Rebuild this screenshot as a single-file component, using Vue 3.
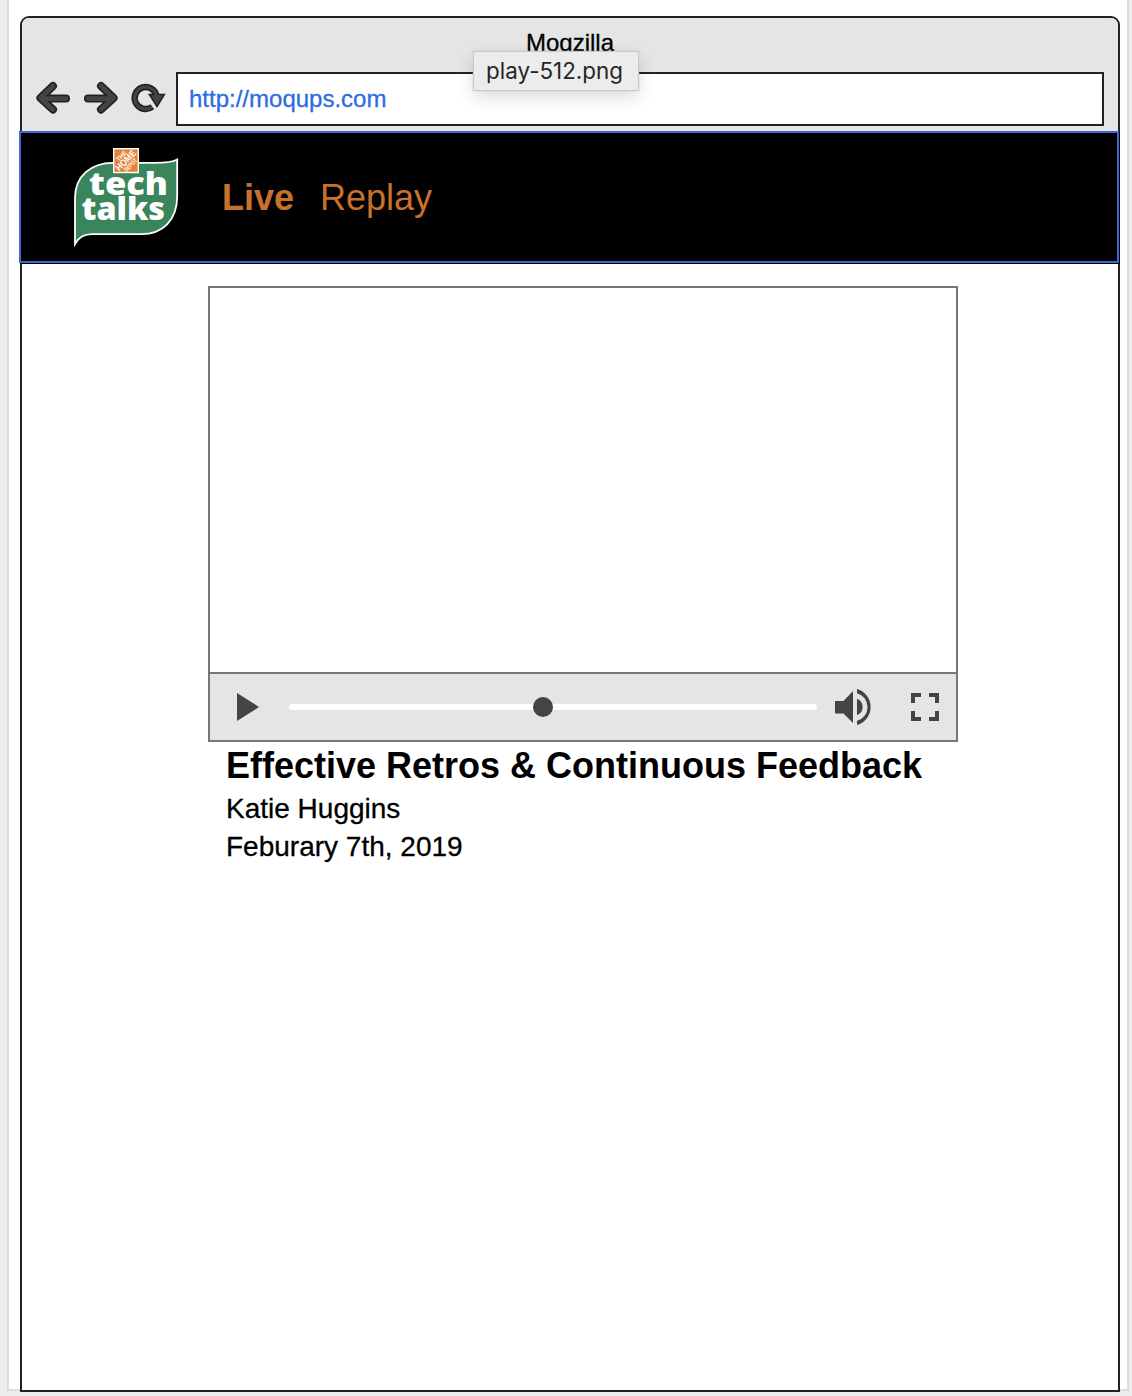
<script setup>
const url = 'http://moqups.com'
const talk = {
  title: 'Effective Retros & Continuous Feedback',
  speaker: 'Katie Huggins',
  date: 'Feburary 7th, 2019',
}
</script>

<template>
  <div class="canvas">
    <div class="paper">
      <div class="browser">
        <header class="chrome">
          <div class="title">Moqzilla</div>
          <div class="toolbar">
            <svg class="tools" width="142" height="44" viewBox="30 76 142 44">
              <g fill="none" stroke-linecap="round" stroke-linejoin="round">
                <g stroke="#222" stroke-width="8">
                  <path d="M53 86 L40.400 98 L53 109.500 M42 98.600 H66" />
                  <path d="M101 86 L113.600 98 L101 109.500 M112 98.600 H88" />
                </g>
                <g stroke="#444" stroke-width="4.600">
                  <path d="M53 86 L40.400 98 L53 109.500 M42 98.600 H66" />
                  <path d="M101 86 L113.600 98 L101 109.500 M112 98.600 H88" />
                </g>
              </g>
              <path d="M152.300 106.800 A11 11 0 1 1 156.500 96" fill="none" stroke="#222" stroke-width="6.400" />
              <path d="M149.400 94.500 H164.300 L157 106.400 Z" fill="#444" stroke="#222" stroke-width="1.600" />
              <path d="M151.600 107.200 A11 11 0 1 1 156.600 97" fill="none" stroke="#444" stroke-width="3" />
            </svg>
            <div class="address">{{ url }}</div>
          </div>
          <div class="tooltip">play-512.png</div>
        </header>

        <nav class="nav">
          <svg class="logo" width="106" height="102" viewBox="73 147 106 102">
            <path
              d="M75 244 V198 C75 176 91 162.800 113 162.800 H155 C164 162.800 172 162.500 177.200 159.500 V196 C177.200 220 163 234.200 141 234.200 H92 C84 234.200 78.500 237.500 75 244 Z"
              fill="#3b855d" stroke="#fff" stroke-width="1.800" stroke-miterlimit="8"
            />
            <rect x="113.700" y="148.700" width="24.600" height="23.800" fill="#e5813a" stroke="#fff" stroke-width="1.400" />
            <g class="depot" transform="translate(126 160.600) rotate(-45)" text-anchor="middle">
              <text y="-4.400" font-size="6" textLength="12" lengthAdjust="spacingAndGlyphs">THE</text>
              <text y="3" font-size="9.500" textLength="25" lengthAdjust="spacingAndGlyphs">HOME</text>
              <text y="8.600" font-size="6.500" textLength="16" lengthAdjust="spacingAndGlyphs">DEPOT</text>
            </g>
            <g class="wordmark">
              <text x="89" y="195.400" textLength="79" lengthAdjust="spacingAndGlyphs">tech</text>
              <text x="81.600" y="220" textLength="83.500" lengthAdjust="spacingAndGlyphs">talks</text>
            </g>
          </svg>
          <a class="link active">Live</a>
          <a class="link">Replay</a>
        </nav>

        <main class="content">
          <section class="player">
            <div class="screen"></div>
            <div class="controls">
              <svg class="play" width="22" height="28" viewBox="0 0 22 28">
                <path d="M0 0 L22 14 L0 28 Z" fill="#444" />
              </svg>
              <div class="track"><span class="knob"></span></div>
              <svg class="volume" width="37" height="36" viewBox="0 0 37 36">
                <g fill="#444">
                  <path d="M0 12 H8.500 L18 2 V34 L8.500 24.500 H0 Z" />
                  <path d="M22 9.800 A8.800 8.800 0 0 1 22 26.200 Z" />
                  <path d="M22 0 A18.700 18.700 0 0 1 22 36 V31.800 A14.300 14.300 0 0 0 22 4.200 Z" />
                </g>
              </svg>
              <svg class="expand" width="28" height="28" viewBox="0 0 28 28">
                <path
                  d="M2 10 V2 H10 M18 2 H26 V10 M26 18 V26 H18 M10 26 H2 V18"
                  fill="none" stroke="#444" stroke-width="4"
                />
              </svg>
            </div>
          </section>
          <h1>{{ talk.title }}</h1>
          <p>{{ talk.speaker }}</p>
          <p>{{ talk.date }}</p>
        </main>
      </div>
    </div>
  </div>
</template>

<style>
body {
  background: #ededed;
}
</style>

<style scoped>
.canvas {
  box-sizing: border-box;
  height: 1396px;
  padding: 0 3px 0 7px;
  overflow: hidden;
  font-family: "Liberation Sans", Arial, sans-serif;
  color: #000;
}
.paper {
  box-sizing: border-box;
  height: 1391px;
  padding: 16px 7px 0 11px;
  background: #fff;
  border: 2px solid #dcdcdc;
  border-top: 0;
}
.browser {
  box-sizing: border-box;
  width: 1100px;
  height: 1376px;
  border: 2px solid #222;
  border-radius: 9px 9px 0 0;
  background: #fff;
}
.chrome {
  position: relative;
  box-sizing: border-box;
  height: 113px;
  padding: 11px 14px 0 8px;
  background: #e5e5e5;
  border-radius: 7px 7px 0 0;
}
.title {
  height: 43px;
  padding-left: 6px;
  text-align: center;
  font-size: 24px;
  line-height: 28px;
  -webkit-text-stroke: 0.3px #000;
}
.toolbar {
  display: flex;
  align-items: center;
}
.tools {
  flex: none;
  margin: -2px 4px 0 0;
}
.address {
  flex: 1;
  box-sizing: border-box;
  height: 54px;
  padding-left: 11px;
  border: 2px solid #222;
  background: #fff;
  color: #2a6de0;
  font-size: 24px;
  line-height: 50px;
  -webkit-text-stroke: 0.3px #2a6de0;
}
.tooltip {
  position: absolute;
  left: 452px;
  top: 34px;
  box-sizing: border-box;
  width: 164px;
  height: 38px;
  padding-right: 3px;
  background: #ececec;
  box-shadow: 0 0 1px 1px #c8c8c8, 0 6px 18px rgba(0, 0, 0, 0.17);
  color: #262626;
  font-family: Inter, sans-serif;
  font-size: 22.4px;
  line-height: 37px;
  text-align: center;
  white-space: nowrap;
}
.nav {
  position: relative;
  box-sizing: border-box;
  display: flex;
  align-items: center;
  width: 1100px;
  height: 132px;
  margin-left: -3px;
  padding: 2px 0 0 52px;
  background: #000;
  border: 2px solid #4066d5;
  box-shadow: 1px 1px 0 #000;
}
.logo {
  margin-right: 43px;
}
.depot {
  fill: #fff;
  font-family: "Liberation Sans", sans-serif;
  font-weight: 700;
}
.wordmark {
  fill: #fff;
  font-family: "Open Sans", "Noto Sans", sans-serif;
  font-size: 32px;
  font-weight: 800;
}
.link {
  margin-right: 26px;
  color: #c7712d;
  font-size: 36px;
  line-height: 42px;
}
.active {
  font-weight: 700;
}
.content {
  padding: 23px 0 0 186px;
}
.player {
  box-sizing: border-box;
  width: 750px;
  height: 456px;
  border: 2px solid #777;
}
.screen {
  height: 384px;
  border-bottom: 2px solid #777;
}
.controls {
  display: flex;
  align-items: center;
  height: 66px;
  padding-left: 27px;
  background: #e5e5e5;
}
.track {
  display: flex;
  align-items: center;
  width: 528px;
  height: 6px;
  margin: 0 18px 0 30px;
  border-radius: 3px;
  background: #fff;
}
.knob {
  width: 20px;
  height: 20px;
  margin-left: 244px;
  border-radius: 50%;
  background: #444;
}
.expand {
  margin-left: 39px;
}
h1,
p {
  margin: 0 0 0 18px;
}
h1 {
  height: 48px;
  font-size: 36px;
  line-height: 47px;
  white-space: nowrap;
}
p {
  height: 38px;
  font-size: 28px;
  line-height: 38px;
  -webkit-text-stroke: 0.3px #000;
}
</style>
